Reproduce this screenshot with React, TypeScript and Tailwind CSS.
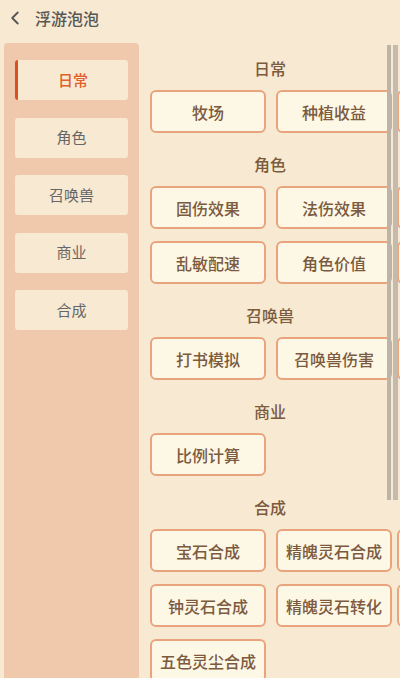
import { ChevronLeft } from "lucide-react";

const tabs = ["日常", "角色", "召唤兽", "商业", "合成"];

const sections: { title: string; items: string[] }[] = [
  { title: "日常", items: ["牧场", "种植收益", ""] },
  { title: "角色", items: ["固伤效果", "法伤效果", "", "乱敏配速", "角色价值", ""] },
  { title: "召唤兽", items: ["打书模拟", "召唤兽伤害", ""] },
  { title: "商业", items: ["比例计算"] },
  { title: "合成", items: ["宝石合成", "精魄灵石合成", "", "钟灵石合成", "精魄灵石转化", "", "五色灵尘合成"] }
];

function ToolButton({ label }: { label: string }) {
  return (
    <button
      type="button"
      className="flex h-[43px] w-[116px] items-center justify-center rounded-[6px] border-2 border-[#e9a47e] bg-[#fdf7e6] text-[16px] font-medium leading-none text-[#7b5a3e]"
    >
      {label}
    </button>
  );
}

export default function App() {
  const active = 0;

  return (
    <div
      className="relative flex h-[678px] w-[400px] flex-col overflow-hidden bg-[#f8e9d2]"
      style={{ fontFamily: '"Noto Sans CJK SC", "Noto Sans", sans-serif' }}
    >
      <div className="flex h-[43px] shrink-0 items-center gap-[9px] pb-[7px] pl-[4px]">
        <ChevronLeft size={22} strokeWidth={2} className="text-[#555]" />
        <span className="text-[16px] font-medium text-[#555]">浮游泡泡</span>
      </div>

      <div className="flex flex-1">
        <aside className="ml-[4px] flex w-[135px] shrink-0 flex-col gap-[17.5px] rounded-t-[4px] bg-[#f0c9ac] px-[11px] pt-[17px]">
          {tabs.map((tab, i) => (
            <div
              key={tab}
              className={`flex h-[40px] items-center justify-center rounded-[3px] bg-[#f8e9d2] text-[15px] ${
                i === active
                  ? "border-l-[3px] border-[#d9501f] font-medium text-[#e0602a]"
                  : "text-[#666]"
              }`}
            >
              {tab}
            </div>
          ))}
        </aside>

        <main className="flex flex-1 flex-col pl-[11px] pt-[14px]">
          {sections.map((section) => (
            <div key={section.title} className="flex flex-col">
              <div className="flex h-[22px] w-[240px] items-center justify-center text-[16px] font-medium text-[#7b5a3e]">
                {section.title}
              </div>
              <div className="mb-[20px] mt-[11px] grid grid-cols-[126px_121px_116px] gap-y-[12px]">
                {section.items.map((item, i) => (
                  <ToolButton key={section.title + i} label={item} />
                ))}
              </div>
            </div>
          ))}
        </main>
      </div>

      <div className="absolute left-[387px] top-[45px] flex h-[455px] w-[11px] gap-[2px]">
        <div className="w-[4px] bg-[#bdb4a7]" />
        <div className="w-[5px] bg-[#c4bbae]" />
      </div>
    </div>
  );
}
